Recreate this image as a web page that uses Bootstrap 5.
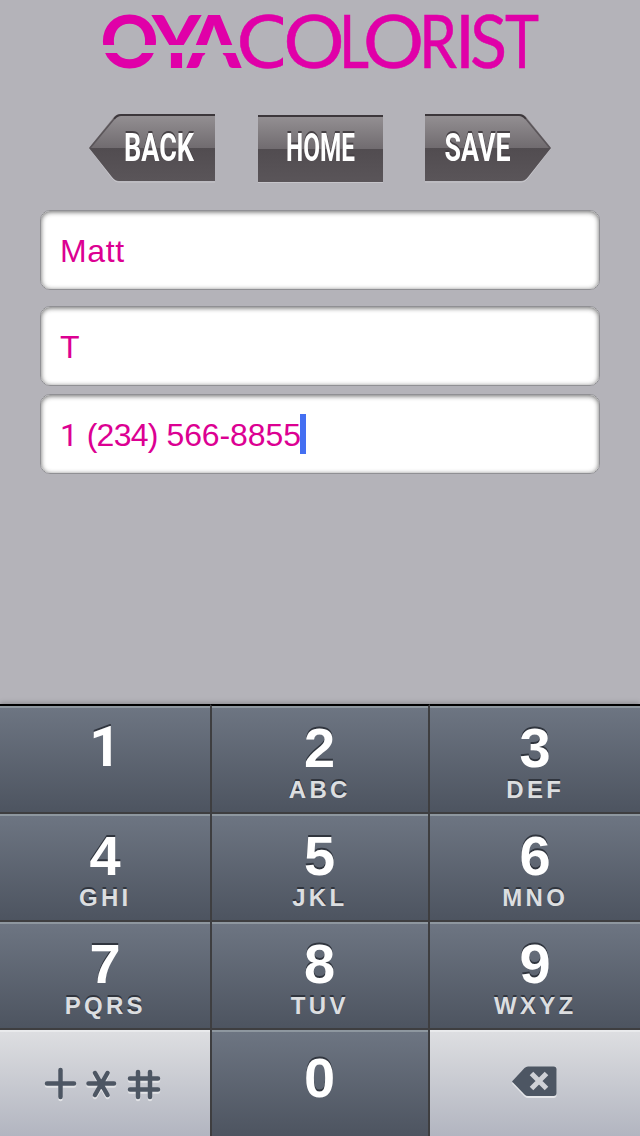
<!DOCTYPE html>
<html lang="en">
<head>
<meta charset="utf-8">
<meta name="viewport" content="width=device-width, initial-scale=1">
<title>OYA Colorist</title>
<link href="https://cdn.jsdelivr.net/npm/bootstrap@5.3.0/dist/css/bootstrap.min.css" rel="stylesheet">
<style>
body{background:#b4b3b9;font-family:"Liberation Sans",Arial,sans-serif;}
.screen{width:640px;height:1136px;overflow:hidden;}
.brand-row{height:114px;}
.brand-row svg,.nav-btn svg{display:block;}
.nav-row{height:96px;gap:42px;padding-left:89px;}
.nav-btn{border:0;padding:0;border-radius:0;line-height:1;}
.nav-btn text{font-family:Roboto,sans-serif;font-weight:700;font-size:38px;fill:#fff;filter:drop-shadow(0 -1.5px 0 #454044);}
.entry{height:80px;width:560px;border:1px solid #909094;border-radius:10px;padding:2px 19px 0;font-size:32px;line-height:1;color:#dc0092;background:#fff;box-shadow:inset 0 1px 5px rgba(0,0,0,.6);letter-spacing:.6px;}
.entry.phone{margin-top:8px;padding-top:0;}
.entry.phone span{letter-spacing:-.1px;padding-top:2px;}
.entry.phone .area{letter-spacing:-.75px;}
.one{font-family:Roboto,sans-serif;}
.entry + .entry:not(.phone){margin-top:16px;}
.cursor{width:6px;height:40px;background:#446ff2;margin-left:-1px;}
.keypad{display:grid;grid-template-columns:210px 220px 210px;grid-template-rows:repeat(4,108px);box-shadow:0 -1px 5px rgba(0,0,0,.25);}
.key{border:0;border-top:2px solid #3e3e40;border-radius:0;padding:0;color:#fff;background:linear-gradient(#8e979f 0 2px,#6d7582 2px,#4d5460 100%);display:flex;flex-direction:column;align-items:center;line-height:1;}
.key:nth-child(-n+3){border-top-color:#000;}
.key:nth-child(3n+2){border-left:2px solid #3e3e40;border-right:2px solid #3e3e40;padding-right:1px;}
.num{font-size:56px;font-weight:700;height:56px;margin-top:14px;text-shadow:0 -2px 0 #30353e;}
.num.one{font-size:55px;line-height:55px;}
.abc{font-size:24px;font-weight:700;letter-spacing:3.3px;margin-right:-.5px;height:24px;margin-top:2px;color:#dcdee0;text-shadow:0 -2px 0 #30353e;}
.zero .num{margin-top:20px;}
.key.pale{background:linear-gradient(#e9eaec 0 2px,#dddee1 2px,#b2b5c0 100%);}
</style>
</head>
<body>
<main class="screen d-flex flex-column">
  <header class="brand-row">
    <svg width="640" height="84" viewBox="0 0 640 84" fill="#e000a8" font-family="Lato, sans-serif" font-size="73" role="img" aria-label="OYACOLORIST">
      <text y="68" font-weight="900"><tspan x="100.500" textLength="58" lengthAdjust="spacingAndGlyphs">O</tspan><tspan x="152" textLength="49" lengthAdjust="spacingAndGlyphs">Y</tspan><tspan x="187" textLength="54" lengthAdjust="spacingAndGlyphs">A</tspan></text>
      <path d="M100 45H241V53H100ZM206 52H222L227 61H201Z" fill="#b4b3b9"/>
      <text x="236.500" y="68" textLength="54" lengthAdjust="spacingAndGlyphs" stroke="#e000a8" stroke-width=".5">C</text>
      <path d="M283 10H295V74H283Z" fill="#b4b3b9"/>
      <text y="68" stroke="#e000a8" stroke-width=".5"><tspan x="283.500" textLength="61" lengthAdjust="spacingAndGlyphs">O</tspan><tspan x="339" textLength="30" lengthAdjust="spacingAndGlyphs">L</tspan><tspan x="363" textLength="61" lengthAdjust="spacingAndGlyphs">O</tspan><tspan x="419" textLength="38" lengthAdjust="spacingAndGlyphs">R</tspan><tspan x="455" textLength="20" lengthAdjust="spacingAndGlyphs">I</tspan><tspan x="470" textLength="37" lengthAdjust="spacingAndGlyphs">S</tspan><tspan x="505" textLength="34" lengthAdjust="spacingAndGlyphs">T</tspan></text>
    </svg>
  </header>
  <nav class="nav-row d-flex align-items-start">
    <button class="btn nav-btn"><svg width="127" height="69">
      <defs><linearGradient id="metal" x1="0" y1="0" x2="0" y2="1"><stop offset="0" stop-color="#959194"/><stop offset=".5" stop-color="#716c70"/><stop offset=".5" stop-color="#514c50"/><stop offset="1" stop-color="#5a5559"/></linearGradient></defs>
      <path d="M126 68H29Q26 68 23 64L1 35" fill="none" stroke="#c6c5ca"/>
      <path d="M0 34 24 4Q27 0 31 0H126V67H30Q26 67 23 63Z" fill="url(#metal)"/>
      <path d="M25 5Q28 1 32 1H126" fill="none" stroke="#3c373b" stroke-width="2"/><path d="M1 34 25 5" stroke="#5a5559" stroke-width="1.500"/>
      <text x="35" y="47" textLength="70" lengthAdjust="spacingAndGlyphs">BACK</text></svg></button>
    <button class="btn nav-btn"><svg width="125" height="69">
      <path d="M0 1H125V68H0Z" fill="url(#metal)"/><path d="M0 2H125" stroke="#3c373b" stroke-width="2"/><path d="M0 68.500H125" stroke="#c6c5ca"/>
      <text x="28" y="47" textLength="69" lengthAdjust="spacingAndGlyphs">HOME</text></svg></button>
    <button class="btn nav-btn"><svg width="127" height="69">
      <path d="M0 68H97Q100 68 103 64L125 35" fill="none" stroke="#c6c5ca"/>
      <path d="M126 34 102 4Q99 0 95 0H0V67H96Q100 67 103 63Z" fill="url(#metal)"/>
      <path d="M101 5Q98 1 94 1H0" fill="none" stroke="#3c373b" stroke-width="2"/><path d="M125 34 101 5" stroke="#5a5559" stroke-width="1.500"/>
      <text x="19.500" y="47" textLength="66" lengthAdjust="spacingAndGlyphs">SAVE</text></svg></button>
  </nav>
  <section class="d-flex flex-column align-items-center">
    <div class="entry d-flex align-items-center"><span>Matt</span></div>
    <div class="entry d-flex align-items-center"><span>T</span></div>
    <div class="entry phone d-flex align-items-center"><span><b class="one fw-normal">1</b> <b class="area fw-normal">(234)</b> 566-8855</span><i class="cursor"></i></div>
  </section>
  <section class="keypad mt-auto">
    <button class="key"><span class="num one">1</span></button>
    <button class="key"><span class="num">2</span><span class="abc">ABC</span></button>
    <button class="key"><span class="num">3</span><span class="abc">DEF</span></button>
    <button class="key"><span class="num">4</span><span class="abc">GHI</span></button>
    <button class="key"><span class="num">5</span><span class="abc">JKL</span></button>
    <button class="key"><span class="num">6</span><span class="abc">MNO</span></button>
    <button class="key"><span class="num">7</span><span class="abc">PQRS</span></button>
    <button class="key"><span class="num">8</span><span class="abc">TUV</span></button>
    <button class="key"><span class="num">9</span><span class="abc">WXYZ</span></button>
    <button class="key pale" aria-label="Symbols"><svg width="210" height="106" viewBox="0 1030 210 106" fill="none" stroke-width="4.500" stroke-linecap="round">
      <defs><path id="symbols" d="M47 1083.500H74M60.500 1070V1097M88.500 1083.500H114M95 1073 107.500 1095M107.500 1073 95 1095M130 1078.500H158M130 1089.500H158M138 1072V1097M150 1072V1097"/></defs>
      <use href="#symbols" y="2" stroke="#e2e3e6"/><use href="#symbols" stroke="#4d5663"/></svg></button>
    <button class="key zero"><span class="num">0</span></button>
    <button class="key pale" aria-label="Delete"><svg width="210" height="106" viewBox="430 1030 210 106">
      <defs><path id="erase" d="M512 1081.500 524.500 1068Q526 1066.500 528 1066.500H553.500Q556.500 1066.500 556.500 1069.500V1093Q556.500 1096 553.500 1096H528Q526 1096 524.500 1094.500Z"/></defs>
      <use href="#erase" y="2" fill="#e5e6e9"/><use href="#erase" fill="#4d5663"/>
      <path d="M531.500 1073.500 546.500 1088.500M546.500 1073.500 531.500 1088.500" stroke="#cfd1d6" stroke-width="5"/></svg></button>
  </section>
</main>
<script src="https://cdn.jsdelivr.net/npm/bootstrap@5.3.0/dist/js/bootstrap.bundle.min.js"></script>
</body>
</html>
